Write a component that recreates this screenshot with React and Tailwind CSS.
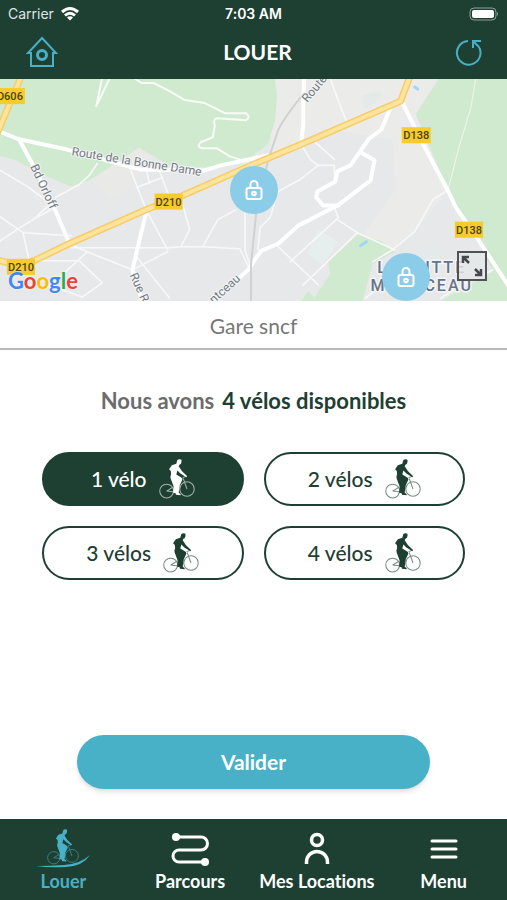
import React, { useState } from 'react';

const minorRoads = [
  'M0 90 L30 108 L56 128 L34 140 L18 150 L0 162',
  'M56 118 L80 105 L90 96 L98 84',
  'M0 136 L24 153 L72 156',
  'M24 153 L30 180',
  'M56 120 L34 140',
  'M131 90 L147 131 L168 170',
  'M137 108 L163 98',
  'M147 92 L150 104',
  'M160 92 L170 118',
  'M70 164 L88 172 L133 190 L168 172',
  'M72 168 L170 168 L181 167',
  'M38 181 L80 181 L103 203 L83 217 L50 205',
  'M88 172 L50 207',
  'M137 177 L170 218',
  'M181 118 L190 150 L181 167 L203 167 L240 169 L250 190',
  'M203 167 L218 140 L236 130',
  'M245 130 L245 170 L250 185',
  'M301 65 L310 80 L318 86 L334 86 L334 100',
  'M318 86 L300 100 L278 112 L270 138 L260 148 L258 170',
  'M314 62 L334 80',
  'M330 0 L338 22 L346 42',
  'M277 166 L318 205',
  'M290 182 L338 138 L334 128',
  'M337 140 L357 153 L394 170',
  'M357 153 L303 205',
  'M445 112 L432 120 L414 152 L392 170 L372 182',
  'M365 218 L382 205 L392 205',
  'M440 218 L470 200 L492 190',
];

const mainRoads = [
  'M0 52 L20 60 L67 70 L140 90 L205 91 L221 86 L268 76',
  'M20 60 L37 91 L55 128 L70 163',
  'M147 131 L133 190 L143 222',
  'M401 22 L425 70 L447 111 L455 128 L474 155 L510 210',
  'M304 -2 L303 23 L303 45 L301 65',
  'M390 28 L381 50 L368 60 L350 86 L337 92 L335 102 L317 112 L316 118 L323 126 L338 126',
  'M360 73 L374 81 L370 101 L337 126 L298 146 L278 164 L261 171 L248 190 L212 224',
];

const forestPaths = [
  'M133 -2 L142 4 L154 4 L170 12 L185 21 L205 24 L213 28 L225 34 L246 34 Q251 38 246 41 L217 39 Q213 40 215 46 L213 58 L201 63 Q196 68 203 69 L217 69 L230 77 L249 83',
  'M103 -2 L97 27 M111 -2 L97 27',
];

const yellowRoads = [
  'M-2 180 L20 186 L37 180 L70 164 L147 130 L183 116 L251 86 L301 65 L338 49 L400 22 L409 -2',
  'M22 -2 L-2 55',
];

const roadSigns = [
  { label: 'D606', x: -4, y: 9, w: 30 },
  { label: 'D210', x: 155, y: 114, w: 28 },
  { label: 'D210', x: 8, y: 179, w: 28 },
  { label: 'D138', x: 401, y: 48, w: 29 },
  { label: 'D138', x: 454, y: 142, w: 28 },
];

const MapDrawing = () => (
  <svg
    viewBox="0 0 507 221"
    preserveAspectRatio="xMidYMid slice"
    className="block w-full h-full font-['Roboto',sans-serif]"
    fill="none"
    strokeLinejoin="round"
    strokeLinecap="round"
  >
    <rect width="507" height="221" fill="#e7e8e9" />
    <path d="M275 0 H437 L415 35 L447 111 L414 152 L392 170 L362 156 L395 110 L392 60 L330 50 L270 76 Z" fill="#ebebea" />
    <path d="M90 101 L140 68 L150 78 L125 115 L112 118 Z" fill="#e9e9e8" />
    <path d="M0 0 H275 L277 18 L275 41 L268 65 L248 80 L205 88 L168 85 L147 73 L140 68 L113 86 L90 101 L72 107 L43 95 L17 81 L0 76 Z" fill="#d0eacf" />
    <path d="M438 0 H507 V221 H440 L492 192 L474 155 L447 111 L415 35 Z" fill="#d0eacf" />
    <path d="M301 221 L308 211 L314 218 L330 194 L328 182 L357 155 L380 161 L394 172 L372 184 L362 221 Z" fill="#d0eacf" />
    <path d="M318 150 L338 162 L322 185 L307 173 Z" fill="#e6efed" />
    <path d="M362 16 L380 12 L380 20 L364 30 Z M417 169 H441 V184 H417 Z" fill="#e3eae9" />
    <path d="M360 166 L366 162 M414 8 L417 10" stroke="#a3d5f5" strokeWidth="3" />

    {minorRoads.map((d) => (
      <path key={d} d={d} stroke="#f8f8f8" strokeWidth="1.600" />
    ))}
    {forestPaths.map((d) => (
      <path key={d} d={d} stroke="#f7fcf7" strokeWidth="2" />
    ))}
    <path d="M475 -2 L470 28 L458 68 L447 111" stroke="#ecf6ec" />
    {mainRoads.map((d) => (
      <path key={d} d={d} stroke="#ffffff" strokeWidth="4" />
    ))}
    <path d="M304 14 Q284 38 278 51 L268 81 L256 135 L251 185 V222" stroke="#cfd1d2" strokeWidth="2" />
    {yellowRoads.map((d) => (
      <path key={d} d={d} stroke="#f5cd6c" strokeWidth="7" />
    ))}
    {yellowRoads.map((d) => (
      <path key={d} d={d} stroke="#fee49a" strokeWidth="4" />
    ))}

    <g fill="#737a82" stroke="#f4f5f5" strokeWidth="2" paintOrder="stroke" fontSize="12">
      <text transform="translate(72 76) rotate(9)">Route de la Bonne Dame</text>
      <text transform="translate(31 87) rotate(65)">Bd Orloff</text>
      <text transform="translate(130 195) rotate(66)">Rue R</text>
      <text transform="translate(307 24) rotate(-50)">Route</text>
      <text transform="translate(214 224) rotate(-42)">ntceau</text>
    </g>
    <g fill="#66738c" stroke="#f4f5f5" strokeWidth="3" paintOrder="stroke" fontSize="16" fontWeight="500" textAnchor="middle">
      <text x="421" y="193" letterSpacing="2">LA BUTTE</text>
      <text x="421" y="211" letterSpacing="2">MONTCEAU</text>
    </g>
    {roadSigns.map((sign) => (
      <g key={`${sign.label}-${sign.x}`}>
        <rect x={sign.x} y={sign.y} width={sign.w} height="16" fill="#f6cb2d" />
        <text x={sign.x + sign.w / 2} y={sign.y + 12} fill="#4d4210" fontSize="11" fontWeight="500" textAnchor="middle">
          {sign.label}
        </text>
      </g>
    ))}
  </svg>
);

const GoogleLogo = () => (
  <span className="absolute left-2 bottom-1 text-[22px] leading-8 font-bold font-['Lato',sans-serif] [text-shadow:0_0_2px_#fff]">
    <span className="text-[#4285f4]">G</span>
    <span className="text-[#ea4335]">o</span>
    <span className="text-[#fbbc05]">o</span>
    <span className="text-[#4285f4]">g</span>
    <span className="text-[#34a853]">l</span>
    <span className="text-[#ea4335]">e</span>
  </span>
);

const LockPin = ({ label, className }) => (
  <button
    aria-label={label}
    className={`absolute -translate-x-1/2 flex items-center justify-center w-12 h-12 rounded-full bg-[#8bcde8] ${className}`}
  >
    <svg viewBox="0 0 18 22" className="w-[18px] h-[22px]" fill="none" stroke="#fff" strokeWidth="2">
      <rect x="1.500" y="9" width="15" height="11" rx="2" />
      <path d="M5.500 9 V5.500 a3.500 3.500 0 0 1 7 0 V9" />
      <circle cx="9" cy="14.500" r="1.800" />
    </svg>
  </button>
);

const Cyclist = ({ className }) => (
  <svg viewBox="0 0 104 116" className={className} fill="none" stroke="currentColor">
    <g strokeWidth="3" opacity="0.600">
      <circle cx="22" cy="93" r="20" />
      <circle cx="81" cy="87" r="21" />
      <path d="M22 93 L40 82 M22 93 L46 96 M70 56 L81 87 M68 54 L80 50" />
    </g>
    <g fill="currentColor" stroke="none">
      <path d="M53 3 Q58 -1 65 2 L65 9 Q64 17 59 17 L57 21 L66 35 L81 49 L79 53 L62 42 L53 33 L50 45 L62 52 Q69 56 67 61 L60 76 L57 98 L63 102 L62 105 L49 104 L48 99 L41 98 L42 79 L35 60 Q31 52 35 44 L34 35 L29 30 L37 18 L50 14 Z" />
    </g>
  </svg>
);

const HomeIcon = () => (
  <svg viewBox="0 0 32 32" className="w-8 h-8" fill="none" stroke="#48b0c7" strokeWidth="2">
    <path d="M16 2 L30 17 H27 V30 H5 V17 H2 Z" />
    <circle cx="16" cy="19" r="4.500" strokeWidth="3" />
  </svg>
);

const ReloadIcon = () => (
  <svg viewBox="0 0 28 28" className="w-7 h-7" fill="none" stroke="#48b0c7" strokeWidth="2">
    <path d="M13 3 A11.800 11.800 0 1 0 23 7.500" />
    <path d="M18 10 V3 H26 M18 3 L23 8" />
  </svg>
);

const RideIcon = () => (
  <span className="relative block w-14 h-10">
    <Cyclist className="w-8 h-9 mx-auto" />
    <svg viewBox="0 0 56 40" className="absolute inset-0 w-14 h-10" fill="currentColor">
      <path d="M1 37 Q16 37 29 36 Q45 35 55 26 Q48 37 31 38 Q14 39 1 37 Z" />
    </svg>
  </span>
);

const RouteIcon = () => (
  <svg viewBox="0 0 40 36" className="w-10 h-9" fill="none" stroke="currentColor" strokeWidth="3">
    <path d="M5 6 H31 a6 6 0 0 1 0 13 H9 a6 6 0 0 0 0 12 H34" />
    <circle cx="6" cy="6" r="4" fill="currentColor" stroke="none" />
    <circle cx="35" cy="31" r="4" fill="currentColor" stroke="none" />
  </svg>
);

const PersonIcon = () => (
  <svg viewBox="0 0 28 36" className="w-7 h-9" fill="none" stroke="currentColor" strokeWidth="3.500">
    <circle cx="14" cy="9" r="5.500" />
    <path d="M3.500 33 V31 a10.500 10.500 0 0 1 21 0 V33" />
  </svg>
);

const MenuIcon = () => (
  <svg viewBox="0 0 28 36" className="w-7 h-9" fill="none" stroke="currentColor" strokeWidth="3" strokeLinecap="round">
    <path d="M2 10 H26 M2 18 H26 M2 26 H26" />
  </svg>
);

const tabs = [
  { label: 'Louer', Icon: RideIcon },
  { label: 'Parcours', Icon: RouteIcon },
  { label: 'Mes Locations', Icon: PersonIcon },
  { label: 'Menu', Icon: MenuIcon },
];

const App = () => {
  const [count, setCount] = useState(1);
  const [activeTab, setActiveTab] = useState('Louer');

  return (
    <div className="flex flex-col min-h-screen bg-white font-['Lato',sans-serif] [font-variant-ligatures:none]">
      <header className="bg-[#1e4033] text-white">
        <div className="grid grid-cols-3 items-center h-7 px-2 text-sm font-['Inter',sans-serif]">
          <div className="flex items-center gap-1.5 text-[#dfe6e3]">
            <span>Carrier</span>
            <svg viewBox="0 0 20 15" className="w-5 h-4" fill="none" stroke="#fff" strokeWidth="3">
              <path d="M2 5.500 Q10 -1.500 18 5.500 M5 9 Q10 4.500 15 9" />
              <path d="M7 11 Q10 8.500 13 11 L10 14 Z" fill="#fff" stroke="none" />
            </svg>
          </div>
          <span className="text-center font-semibold">7:03 AM</span>
          <svg viewBox="0 0 30 14" className="w-[30px] h-[14px] justify-self-end" fill="none">
            <rect x="1" y="1" width="26" height="12" rx="4" stroke="#8ea099" />
            <rect x="3" y="3" width="22" height="8" rx="2" fill="#fff" />
            <path d="M28 5 Q30 7 28 9 Z" fill="#8ea099" />
          </svg>
        </div>
        <div className="flex items-center justify-between px-6 pb-1 h-[51px]">
          <button aria-label="Accueil" className="px-0.5"><HomeIcon /></button>
          <h1 className="text-[21px] leading-7 font-bold">LOUER</h1>
          <button aria-label="Actualiser"><ReloadIcon /></button>
        </div>
      </header>

      <section className="relative h-[222px] overflow-hidden">
        <MapDrawing />
        <GoogleLogo />
        <LockPin label="Station Gare sncf" className="left-1/2 top-[87px]" />
        <LockPin label="Station La Butte Montceau" className="left-[80%] bottom-0" />
        <button aria-label="Agrandir la carte" className="absolute right-5 bottom-5 w-[30px] h-[30px] border-2 border-[#505255] bg-[#e5e7e7]/80">
          <svg viewBox="0 0 26 26" className="w-full h-full" fill="none" stroke="#46484b" strokeWidth="2.500">
            <path d="M4 10 V4 H10 M4 4 L10 10 M22 16 V22 H16 M22 22 L16 16" />
          </svg>
        </button>
      </section>

      <p className="pt-2.5 pb-2 border-b-2 border-[#b9b9b9] text-center text-[21px] leading-[29px] text-[#777777]">Gare sncf</p>

      <main className="flex flex-col flex-1 px-[42px] pt-9">
        <h2 className="flex flex-wrap justify-center gap-x-2 text-[22px] leading-[30px] font-bold text-[#1e4033]">
          <span className="text-[#6c6c6c]">Nous avons</span>
          <span>4 vélos disponibles</span>
        </h2>
        <div className="grid grid-cols-2 gap-5 mt-9">
          {[1, 2, 3, 4].map((n) => (
            <button
              key={n}
              onClick={() => setCount(n)}
              aria-pressed={count === n}
              className={`flex items-center justify-center gap-3 h-[54px] rounded-full border-2 border-[#1e4033] text-[21px] font-medium ${
                count === n ? 'bg-[#1e4033] text-white' : 'bg-white text-[#1e4033]'
              }`}
            >
              <span>{n === 1 ? '1 vélo' : `${n} vélos`}</span>
              <Cyclist className="w-9 h-10" />
            </button>
          ))}
        </div>
        <button className="mx-[35px] mt-auto mb-[30px] h-[54px] rounded-full bg-[#48b0c7] text-white text-[21px] font-bold shadow-md">
          Valider
        </button>
      </main>

      <nav className="grid grid-cols-4 h-[81px] bg-[#1e4033]">
        {tabs.map(({ label, Icon }) => (
          <button
            key={label}
            onClick={() => setActiveTab(label)}
            className={`flex flex-col items-center pt-2.5 whitespace-nowrap ${
              activeTab === label ? 'text-[#48b0c7]' : 'text-white'
            }`}
          >
            <span className="flex items-center h-10"><Icon /></span>
            <span className="text-lg leading-6 font-bold">{label}</span>
          </button>
        ))}
      </nav>
    </div>
  );
};

export default App;
